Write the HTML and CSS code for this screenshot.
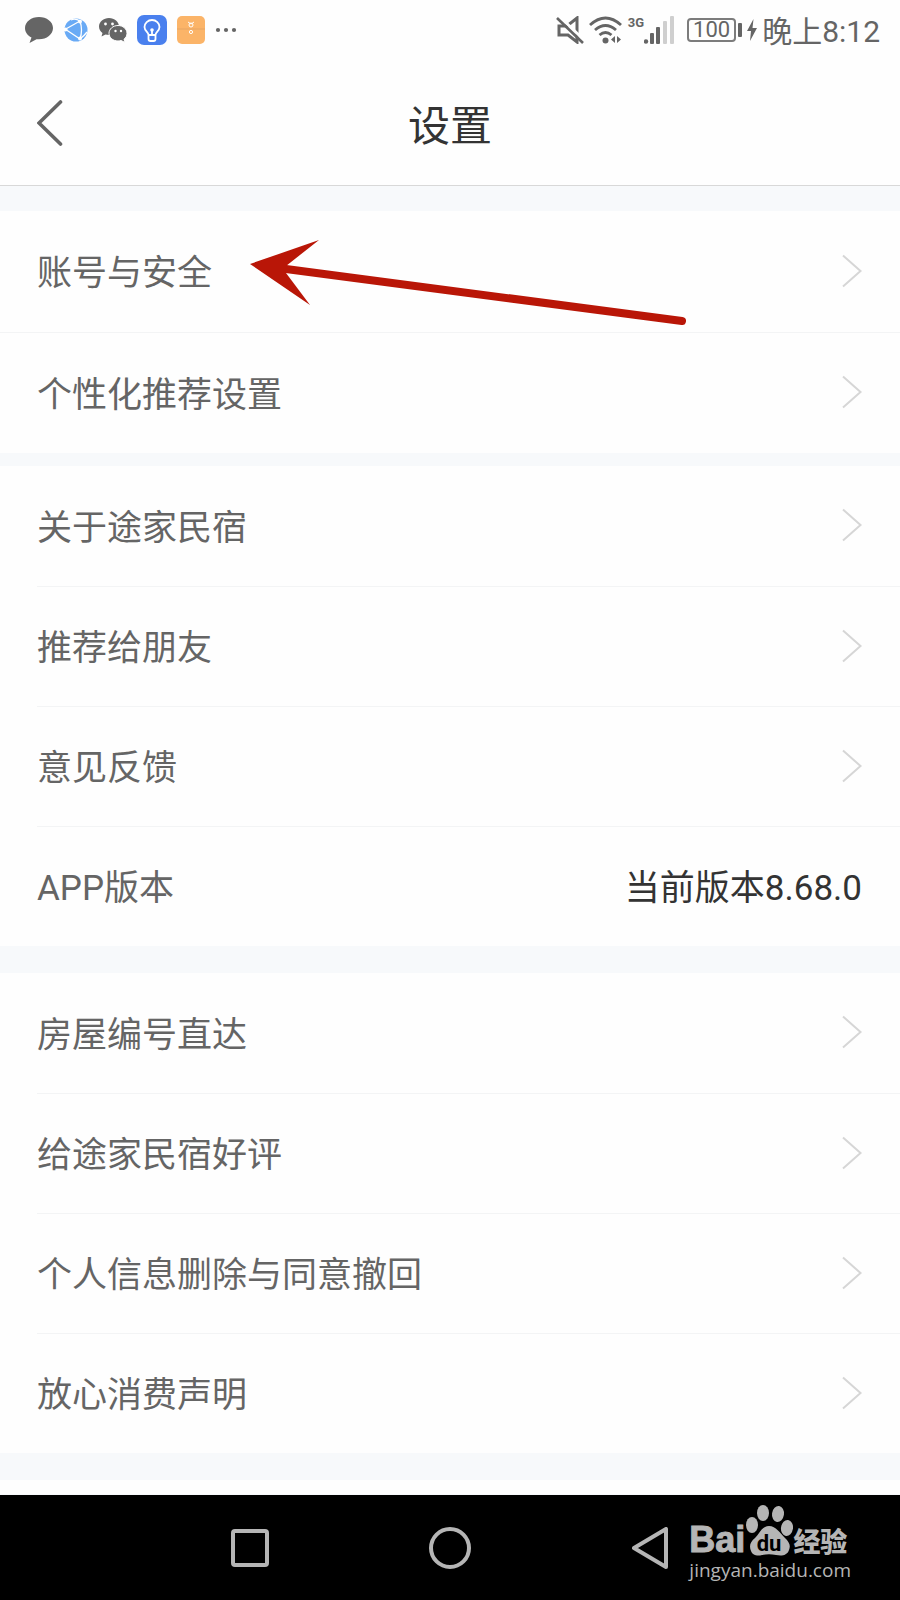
FILE: index.html
```html
<!doctype html>
<html lang="zh-CN">
<head>
    <meta charset="utf-8">
    <meta name="viewport" content="width=device-width, initial-scale=1">
    <title>设置</title>
    <link rel="stylesheet" href="styles.css">
</head>
<body>
    <!-- shared row chevron -->
    <svg class="defs" width="0" height="0" aria-hidden="true">
        <symbol id="chevron" viewBox="0 0 20 34">
            <path d="M1 1.500L18.500 17L1 32.500" fill="none" stroke="#d6d6d6" stroke-width="2"/>
        </symbol>
    </svg>

    <div class="status-bar">
        <div class="status-left">
            <svg width="28" height="28" viewBox="0 0 28 28">
                <path d="M14 1C6.300 1 0 5.800 0 12c0 4 2.500 7.500 6.500 9.500L4.500 27l7-3.800c.8.100 1.600.100 2.500.100 7.700 0 14-5 14-11.300S21.700 1 14 1z" fill="#656565"/>
            </svg>
            <svg width="26" height="24" viewBox="-1 0 26 24">
                <circle cx="12" cy="12" r="11.500" fill="#69aaf5"/>
                <path d="M0 12L16 3M1 11l15 10M16 3q3 9 0 18M16 21q4-3 7-7M16 3q-5-3-9-1" fill="none" stroke="#fff" stroke-width="1.300"/>
                <circle cx="16" cy="3.500" r="2" fill="#fff"/>
                <circle cx="16" cy="20.500" r="2" fill="#fff"/>
                <circle cx="1.500" cy="11.500" r="2" fill="#fff"/>
            </svg>
            <svg width="28" height="26" viewBox="0 0 28 26">
                <path d="M10 1C4.500 1 0 4.700 0 9.500c0 2.700 1.400 5 3.500 6.500L2.500 19.500l4-2c1.100.300 2.300.500 3.500.500 5.500 0 10-3.800 10-8.500S15.500 1 10 1z" fill="#656565"/>
                <path d="M19 8.500c-5 0-9 3.500-9 7.800s4 7.700 9 7.700c1.100 0 2.200-.2 3.200-.5l3.800 2-1-3.300c2-1.400 3-3.500 3-5.900 0-4.300-4-7.800-9-7.800z" fill="#656565" stroke="#fff" stroke-width="1"/>
                <circle cx="6.500" cy="7" r="1.400" fill="#fff"/>
                <circle cx="13.500" cy="7" r="1.400" fill="#fff"/>
                <circle cx="16.500" cy="14" r="1.200" fill="#fff"/>
                <circle cx="22" cy="14" r="1.200" fill="#fff"/>
            </svg>
            <svg width="30" height="30" viewBox="0 0 30 30">
                <rect width="30" height="30" rx="7" fill="#4a80ee"/>
                <path d="M11.500 20c0-3-4-4-4-8a7.500 7 0 0 1 15 0c0 4-4 5-4 8zM11.500 20v4q0 2 2 2h3q2 0 2-2v-4M15 20v-5" fill="none" stroke="#fff" stroke-width="1.800"/>
                <circle cx="15" cy="15" r="1.800" fill="#fff"/>
            </svg>
            <svg width="28" height="28" viewBox="0 0 28 28">
                <rect width="28" height="28" rx="5" fill="#fbb468"/>
                <path d="M0 13h28" stroke="#e6a565" stroke-width="1"/>
                <path d="M11 6l3 2 3-2" fill="none" stroke="#fff" stroke-width="1"/>
                <circle cx="14" cy="9" r="2" fill="none" stroke="#fff" stroke-width="1"/>
                <circle cx="14" cy="16" r="1.600" fill="none" stroke="#fff" stroke-width="1"/>
            </svg>
            <svg width="22" height="6" viewBox="0 0 22 6" fill="#656565">
                <circle cx="3" cy="3" r="2.100"/>
                <circle cx="11" cy="3" r="2.100"/>
                <circle cx="19" cy="3" r="2.100"/>
            </svg>
        </div>
        <div class="status-right">
            <svg width="28" height="28" viewBox="0 0 28 28" fill="none" stroke="#656565">
                <path d="M21 2v24l-9-7H3v-9h8L21 2z" stroke-width="3"/>
                <path d="M3 0l26 25" stroke="#fefefe" stroke-width="3"/>
                <path d="M1 2l26 25" stroke-width="2.600"/>
            </svg>
            <svg width="34" height="28" viewBox="0 0 34 28" fill="none" stroke="#656565" stroke-width="2.900">
                <path d="M1 9q15.500-14 31 0M6 14q10.500-9 21 0M10.500 19q6-5 12 0"/>
                <circle cx="16.500" cy="24.500" r="3" fill="#656565" stroke="none"/>
                <path d="M26 20v7l-4-3.500zM28 20v7l4-3.500z" fill="#656565" stroke="none"/>
            </svg>
            <div class="signal">
                <span class="network">3G</span>
                <svg width="30" height="28" viewBox="0 0 30 28" fill="#656565">
                    <circle cx="2" cy="25.500" r="2.200"/>
                    <rect x="6" y="17" width="4" height="11" rx="1"/>
                    <rect x="12" y="11" width="4" height="17" rx="1"/>
                    <rect x="19" y="5" width="4" height="23" rx="1" fill="#cfcfcf"/>
                    <rect x="26" y="0" width="4" height="28" rx="1" fill="#cfcfcf"/>
                </svg>
            </div>
            <div class="battery">
                <span class="battery-level">100</span>
                <span class="battery-tip"></span>
            </div>
            <svg width="10" height="22" viewBox="0 0 10 22">
                <path d="M6.500 0L0 12h4L3 22l7-13H5.500z" fill="#656565"/>
            </svg>
            <span class="clock">晚上8:12</span>
        </div>
    </div>

    <header class="header">
        <button class="back" type="button" aria-label="返回">
            <svg width="26" height="46" viewBox="0 0 26 46">
                <path d="M23.500 2L2 23l21.500 21" fill="none" stroke="#656565" stroke-width="3.600" stroke-linecap="round"/>
            </svg>
        </button>
        <h1 class="title">设置</h1>
    </header>

    <main class="settings">
        <section class="group group-full">
            <a class="row" href="#"><span class="label">账号与安全</span><svg class="chevron"><use href="#chevron"/></svg></a>
            <a class="row" href="#"><span class="label">个性化推荐设置</span><svg class="chevron"><use href="#chevron"/></svg></a>
            <svg class="pointer" width="440" height="90" viewBox="0 0 440 90" aria-hidden="true">
                <path d="M36 33L432 85" stroke="#b91607" stroke-width="8" stroke-linecap="round"/>
                <path d="M0 28L69 4L36 30v7L60 69z" fill="#b91607"/>
            </svg>
        </section>
        <section class="group group-near">
            <a class="row" href="#"><span class="label">关于途家民宿</span><svg class="chevron"><use href="#chevron"/></svg></a>
            <a class="row" href="#"><span class="label">推荐给朋友</span><svg class="chevron"><use href="#chevron"/></svg></a>
            <a class="row" href="#"><span class="label">意见反馈</span><svg class="chevron"><use href="#chevron"/></svg></a>
            <div class="row"><span class="label">APP版本</span><span class="label version">当前版本8.68.0</span></div>
        </section>
        <section class="group">
            <a class="row" href="#"><span class="label">房屋编号直达</span><svg class="chevron"><use href="#chevron"/></svg></a>
            <a class="row" href="#"><span class="label">给途家民宿好评</span><svg class="chevron"><use href="#chevron"/></svg></a>
            <a class="row" href="#"><span class="label">个人信息删除与同意撤回</span><svg class="chevron"><use href="#chevron"/></svg></a>
            <a class="row" href="#"><span class="label">放心消费声明</span><svg class="chevron"><use href="#chevron"/></svg></a>
        </section>
        <section class="group group-last"></section>
    </main>

    <nav class="nav-bar">
        <button type="button" aria-label="最近任务">
            <svg width="38" height="38" viewBox="0 0 38 38"><rect x="2" y="2" width="34" height="34" rx="2"/></svg>
        </button>
        <button type="button" aria-label="主屏幕">
            <svg width="42" height="42" viewBox="0 0 42 42"><circle cx="21" cy="21" r="19"/></svg>
        </button>
        <button type="button" aria-label="返回">
            <svg width="36" height="42" viewBox="0 0 36 42"><path d="M34 2v38L2 21z" stroke-linejoin="round"/></svg>
        </button>
        <div class="watermark">
            <div class="brand">
                <span class="brand-bai">Bai</span>
                <svg width="48" height="52" viewBox="0 0 48 52" fill="#b5b5b5">
                    <ellipse cx="7" cy="20" rx="6" ry="8"/>
                    <ellipse cx="18" cy="8" rx="6" ry="8"/>
                    <ellipse cx="33" cy="9" rx="6" ry="8" transform="rotate(8 33 9)"/>
                    <ellipse cx="42" cy="23" rx="6" ry="8" transform="rotate(8 42 23)"/>
                    <path d="M24 21c-7 0-9 7-14 12-5 4-6 8-4 13 2 5 7 5 11 4 5-1 9-1 14 0s11 1 13-5c2-5 0-8-4-12-5-5-9-12-16-12z"/>
                    <text class="brand-du" x="24" y="46" text-anchor="middle">du</text>
                </svg>
                <span class="brand-name">经验</span>
            </div>
            <div class="site">jingyan.baidu.com</div>
        </div>
    </nav>
</body>
</html>
```
FILE: styles.css
```css
* {
    box-sizing: border-box;
}
body {
    margin: 0;
    min-height: 100vh;
    display: flex;
    flex-direction: column;
    background: #fefefe;
    color: #656565;
    font-family: Roboto, "Noto Sans CJK SC", sans-serif;
}
button {
    padding: 0;
    border: 0;
    background: none;
}
svg {
    display: block;
    flex: none;
}
.defs {
    position: absolute;
}

/* Status bar */
.status-bar {
    display: flex;
    justify-content: space-between;
    height: 60px;
    padding: 0 20px 0 25px;
}
.status-left,
.status-right {
    display: flex;
    align-items: center;
}
.status-left {
    gap: 10px;
}
.status-right {
    gap: 5px;
}
.signal {
    display: flex;
    margin-right: 8px;
}
.network {
    font-size: 13px;
    line-height: 13px;
    font-weight: bold;
}
.battery {
    display: flex;
    align-items: center;
    gap: 2px;
}
.battery-level {
    padding: 0 4px;
    border: 2px solid #7c7c7c;
    border-radius: 4px;
    font-size: 22px;
    line-height: 20px;
}
.battery-tip {
    width: 4px;
    height: 14px;
    border-radius: 1px;
    background: #656565;
}
.clock {
    padding-top: 3px;
    font-size: 30px;
    line-height: 50px;
}

/* Header */
.header {
    display: grid;
    grid-template-columns: 1fr auto 1fr;
    align-items: center;
    height: 126px;
    padding: 0 37px;
    border-bottom: 1px solid #d8d8d8;
}
.back {
    justify-self: start;
}
.title {
    margin: 0;
    padding-top: 8px;
    color: #333;
    font-size: 42px;
    font-weight: 400;
    line-height: 60px;
}

/* Settings list */
.settings {
    flex: 1;
    background: #f7f9fb;
}
.group {
    position: relative;
    margin-top: 27px;
    padding-left: 37px;
    background: #fefefe;
}
.group-full {
    margin-top: 25px;
    padding-left: 0;
}
.group-full .row {
    height: 121px;
    padding-left: 37px;
}
.group-near {
    margin-top: 13px;
}
.group-last {
    height: 14px;
}
.row {
    display: flex;
    align-items: center;
    justify-content: space-between;
    height: 120px;
    padding: 0 38px 2px 0;
    color: inherit;
    font-size: 35px;
    line-height: 50px;
    text-decoration: none;
}
.row + .row {
    border-top: 1px solid #f3f4f5;
}
.label {
    padding-top: 7px;
}
.version {
    color: #333;
}
.chevron {
    width: 20px;
    height: 34px;
}
.pointer {
    position: absolute;
    top: 25px;
    left: 250px;
    fill: none;
}

/* System navigation */
.nav-bar {
    position: relative;
    display: grid;
    grid-template-columns: repeat(3, minmax(0, 200px));
    justify-content: center;
    height: 105px;
    background: #000;
}
.nav-bar button {
    display: grid;
    place-items: center;
}
.nav-bar button svg {
    fill: none;
    stroke: #b5b5b5;
    stroke-width: 4px;
}
.watermark {
    position: absolute;
    top: 10px;
    right: 49px;
    color: #b5b5b5;
}
.brand {
    display: flex;
    align-items: flex-end;
}
.brand-bai {
    font-family: "Liberation Sans", sans-serif;
    font-size: 36px;
    font-weight: bold;
    line-height: 34px;
    -webkit-text-stroke: 1px #b5b5b5;
}
.brand-du {
    fill: #000;
    font-family: Roboto, sans-serif;
    font-size: 22px;
    font-weight: bold;
}
.brand-name {
    font-size: 27px;
    font-weight: 900;
    line-height: 28px;
}
.site {
    font-family: "Open Sans", sans-serif;
    font-size: 19px;
    line-height: 26px;
}
```
